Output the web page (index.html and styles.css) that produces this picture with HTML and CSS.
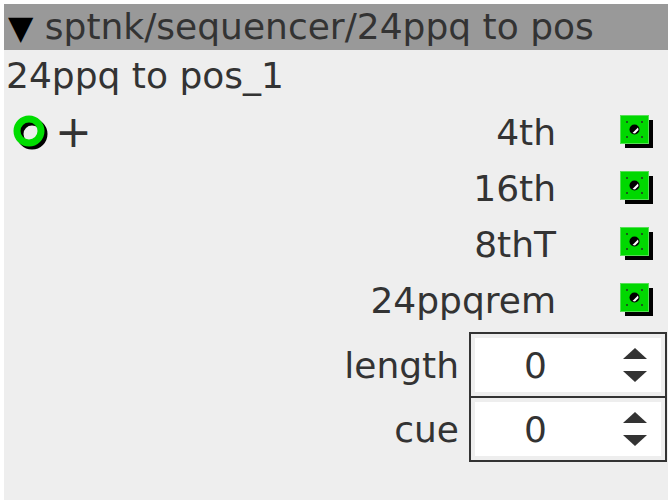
FILE: index.html
```html
<!DOCTYPE html>
<html>
<head>
<meta charset="utf-8">
<link rel="stylesheet" href="styles.css">
</head>
<body>
<div class="panel">
  <div class="header"><span class="tri">▼</span> sptnk/sequencer/24ppq to pos</div>
  <div class="title">24ppq to pos_1</div>
  <div class="rows">
    <div class="row">
      <div class="left">
        <svg class="ring" width="36" height="38" viewBox="0 0 36 38">
          <circle cx="19" cy="21" r="12" fill="none" stroke="#000" stroke-width="7"/>
          <circle cx="16" cy="18" r="12" fill="none" stroke="#00dd00" stroke-width="7"/>
        </svg>
        <span class="plus">+</span>
      </div>
      <span class="label">4th</span>
      <span class="cb"><svg width="34" height="34" viewBox="0 0 34 34"><use href="#chk"/></svg></span>
    </div>
    <div class="row">
      <div class="left"></div>
      <span class="label">16th</span>
      <span class="cb"><svg width="34" height="34" viewBox="0 0 34 34"><use href="#chk"/></svg></span>
    </div>
    <div class="row">
      <div class="left"></div>
      <span class="label">8thT</span>
      <span class="cb"><svg width="34" height="34" viewBox="0 0 34 34"><use href="#chk"/></svg></span>
    </div>
    <div class="row">
      <div class="left"></div>
      <span class="label">24ppqrem</span>
      <span class="cb"><svg width="34" height="34" viewBox="0 0 34 34"><use href="#chk"/></svg></span>
    </div>
  </div>
  <div class="spins">
    <div class="spinrow">
      <span class="slabel">length</span>
      <div class="spin">
        <span class="val">0</span>
        <svg class="arrows" width="26" height="38" viewBox="0 0 26 38"><polygon points="13,2 25,13 1,13" fill="#333"/><polygon points="1,25 25,25 13,36" fill="#333"/></svg>
      </div>
    </div>
    <div class="spinrow">
      <span class="slabel">cue</span>
      <div class="spin">
        <span class="val">0</span>
        <svg class="arrows" width="26" height="38" viewBox="0 0 26 38"><polygon points="13,2 25,13 1,13" fill="#333"/><polygon points="1,25 25,25 13,36" fill="#333"/></svg>
      </div>
    </div>
  </div>
</div>
<svg width="0" height="0" class="defs">
  <defs>
    <g id="chk">
      <rect x="5" y="5" width="28" height="28" fill="#000"/>
      <rect x="0.5" y="0.5" width="28" height="28" fill="#00d800" stroke="#55e055" stroke-width="1"/>
      <g fill="#1a5a1a">
        <rect x="6" y="6" width="2" height="2"/><rect x="21" y="6" width="2" height="2"/>
        <rect x="6" y="21" width="2" height="2"/><rect x="21" y="21" width="2" height="2"/>
      </g>
      <circle cx="14.5" cy="14.5" r="5" fill="#000"/>
      <path d="M12.5 18 L18 12.5 L18.5 15 L15 18.5 Z" fill="#fff"/>
    </g>
  </defs>
</svg>
</body>
</html>
```
FILE: styles.css
```css
html, body {
  margin: 0;
  padding: 0;
  background: #fff;
}
body {
  padding: 4px;
  font-family: "DejaVu Sans", sans-serif;
  color: #333;
}
.panel {
  width: 664px;
  height: 496px;
  background: #eeeeee;
  display: flex;
  flex-direction: column;
}
.header {
  height: 46px;
  background: #999999;
  font-size: 36px;
  line-height: 46px;
  padding-left: 4px;
  white-space: nowrap;
}
.tri {
  color: #000;
  font-size: 33px;
}
.title {
  font-size: 36px;
  line-height: 56px;
  padding-left: 2px;
  margin-top: -2px;
}
.rows {
  display: flex;
  flex-direction: column;
}
.row {
  display: flex;
  align-items: center;
  height: 56px;
  padding-right: 14px;
}
.left {
  flex: 1;
  display: flex;
  align-items: center;
  padding-left: 9px;
  gap: 6px;
}
.plus {
  font-size: 44px;
  line-height: 40px;
}
.label {
  font-size: 36px;
  text-align: right;
  margin-right: 2px;
}
.cb {
  margin-left: 62px;
  display: flex;
}
.spins {
  display: flex;
  flex-direction: column;
  padding-top: 4px;
}
.spinrow {
  display: flex;
  align-items: center;
  justify-content: flex-end;
  gap: 10px;
  padding-right: 1px;
  margin-bottom: -2px;
}
.slabel {
  font-size: 36px;
}
.spin {
  width: 194px;
  height: 62px;
  border: 2px solid #333;
  background: #fff;
  box-shadow: inset 0 0 0 4px #eeeeee;
  display: flex;
  align-items: center;
  box-sizing: content-box;
}
.val {
  flex: 1;
  font-size: 36px;
  text-align: center;
  padding-left: 18px;
}
.arrows {
  margin-right: 17px;
  margin-left: 40px;
}
.defs {
  position: absolute;
}
```
